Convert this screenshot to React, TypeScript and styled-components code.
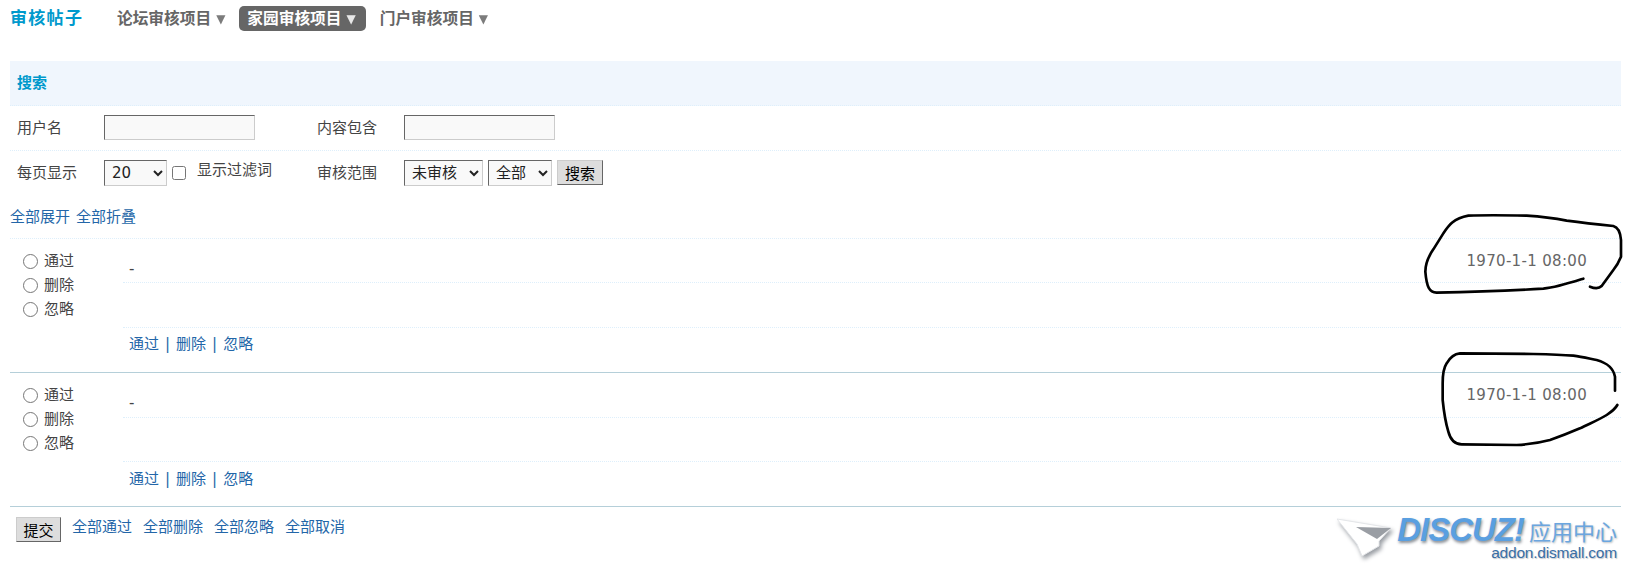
import { FunctionComponent } from "react";
import styled, { createGlobalStyle } from "styled-components";

const GlobalStyle = createGlobalStyle`
  html, body { margin: 0; padding: 0; background: #fff; }
  body {
    font: 15px/20px "DejaVu Sans", "Noto Sans CJK SC", sans-serif;
    color: #444;
  }
  a { color: #2366a8; text-decoration: none; }
`;

const Page = styled.div`
  position: relative;
  width: 1635px;
  height: 578px;
  box-sizing: border-box;
  padding: 0 14px 0 10px;
  overflow: hidden;
`;

/* 상단 메뉴 */
const Header = styled.div`
  display: flex;
  align-items: flex-start;
  height: 61px;
  padding-top: 6px;
  box-sizing: border-box;
`;

const Title = styled.h1`
  margin: 0 27px 0 0;
  width: 72px;
  font-size: 17px;
  line-height: 25px;
  font-weight: bold;
  color: #09c;
  letter-spacing: 1.3px;
  white-space: nowrap;
`;

const Tab = styled.a<{ $active?: boolean }>`
  display: flex;
  align-items: center;
  height: 25px;
  padding: 0 ${(p) => (p.$active ? 10 : 8)}px 0 8px;
  margin-right: 6px;
  border-radius: 5px;
  font-size: 15.7px;
  font-weight: bold;
  white-space: nowrap;
  color: ${(p) => (p.$active ? "#fff" : "#666")};
  background: ${(p) => (p.$active ? "#666" : "transparent")};
`;

const Arrow = styled.span`
  margin-left: 5px;
  font-size: 12px;
  font-family: "DejaVu Sans", sans-serif;
  opacity: 0.85;
`;

/* 검색 영역 */
const SectionHead = styled.div`
  display: flex;
  align-items: center;
  height: 44px;
  padding-left: 7px;
  background: #f0f6fd;
  border-bottom: 1px dotted #deeffb;
  font-size: 15px;
  font-weight: bold;
  color: #09c;
`;

const SearchRow = styled.div<{ $plain?: boolean }>`
  display: grid;
  grid-template-columns: 87px 213px 87px 1fr;
  align-items: center;
  height: 44px;
  padding-left: 7px;
  border-bottom: 1px ${(p) => (p.$plain ? "solid transparent" : "dotted #deeffb")};
`;

const Controls = styled.div`
  display: flex;
  align-items: center;
`;

const TextBox = styled.input`
  width: 151px;
  height: 25px;
  margin-bottom: 2px;
  box-sizing: border-box;
  padding: 0 4px;
  border: 1px solid;
  border-color: #666 #ccc #ccc #666;
  background: #f9f9f9;
`;

const Select = styled.select<{ $w: number }>`
  width: ${(p) => p.$w}px;
  height: 26px;
  margin-right: 5px;
  box-sizing: border-box;
  padding: 0 0 0 3px;
  border: 1px solid;
  border-color: #666 #ccc #ccc #666;
  background: #f9f9f9;
  color: #222;
  font: 15px "DejaVu Sans", "Noto Sans CJK SC", sans-serif;
`;

const Check = styled.input`
  width: 14px;
  height: 14px;
  margin: 0 11px 0 0;
`;

const CheckLabel = styled.span`
  position: relative;
  top: -3px;
`;

const Btn = styled.button`
  width: 46px;
  height: 25px;
  padding: 0;
  box-sizing: border-box;
  border: 1px solid;
  border-color: #ccc #666 #666 #ccc;
  background: #ddd;
  color: #000;
  font: 15px "Noto Sans CJK SC", sans-serif;
`;

const SearchBtn = styled(Btn)`
  margin-bottom: 2px;
`;

const ToggleRow = styled.div`
  display: flex;
  align-items: center;
  gap: 6px;
  height: 44px;
  padding-top: 1px;
  box-sizing: border-box;
  border-bottom: 1px dotted #deeffb;
  margin-top: -1px;
`;

/* 심사 항목 */
const Item = styled.div`
  display: grid;
  grid-template-columns: 113px 1fr;
  border-bottom: 1px solid #b5cfd9;
`;

const Choices = styled.div`
  display: flex;
  flex-direction: column;
  padding: 10px 0 0 13px;
`;

const Choice = styled.label`
  display: flex;
  align-items: center;
  height: 24px;
  gap: 6px;
`;

const Radio = styled.input`
  width: 15px;
  height: 15px;
  margin: 0;
`;

const ItemBody = styled.div`
  display: flex;
  flex-direction: column;
`;

const ItemTop = styled.div<{ $h: number }>`
  display: flex;
  justify-content: space-between;
  align-items: center;
  height: ${(p) => p.$h}px;
  padding: 0 34px 0 6px;
  border-bottom: 1px dotted #deeffb;
`;

const Dash = styled.span`
  padding-top: 16px;
`;

const Time = styled.span`
  font-size: 15px;
  color: #666;
  letter-spacing: 0.32px;
`;

const ItemMiddle = styled.div<{ $h: number }>`
  height: ${(p) => p.$h}px;
  border-bottom: 1px dotted #deeffb;
`;

const ItemLinks = styled.div<{ $pb: number }>`
  display: flex;
  align-items: center;
  gap: 6px;
  height: 44px;
  padding: 0 0 ${(p) => p.$pb}px 6px;
  box-sizing: border-box;
`;

const Pipe = styled.span`
  color: #2366a8;
`;

/* 하단 */
const Footer = styled.div`
  display: flex;
  justify-content: space-between;
  align-items: flex-start;
`;

const FooterActions = styled.div`
  display: flex;
  align-items: flex-start;
  gap: 11px;
  padding: 10px 0 0 6px;
`;

const SubmitBtn = styled(Btn)`
  width: 45px;
`;

const Logo = styled.div`
  display: flex;
  align-items: flex-start;
  padding-top: 8px;
  margin-right: 4px;
`;

const Plane = styled.svg`
  margin-top: 2px;
  filter: drop-shadow(2px 3px 2px #9a9ea4);
`;

const LogoText = styled.div`
  display: flex;
  flex-direction: column;
  align-items: flex-end;
  margin-left: -6px;
`;

const LogoTop = styled.div`
  display: flex;
  align-items: center;
  height: 30px;
`;

const Brand = styled.span`
  display: inline-block;
  font: italic bold 33px/30px "Liberation Sans", sans-serif;
  letter-spacing: -1px;
  color: #5a9fe0;
  text-shadow: 1px 2px 3px #8a8f96;
`;

const BrandCn = styled.span`
  margin-left: 5px;
  font: 22px/30px "Noto Sans CJK SC", sans-serif;
  color: #6ba6df;
  text-shadow: 1px 1px 2px #b8bcc2;
`;

const BrandUrl = styled.span`
  font: 15.5px/16px "Liberation Sans", sans-serif;
  letter-spacing: -0.2px;
  color: #3a6ea5;
  text-shadow: 1px 1px 1px #c4c8cc;
`;

const Scribble = styled.svg`
  position: absolute;
  left: 1400px;
  top: 200px;
  width: 235px;
  height: 260px;
  pointer-events: none;
  fill: none;
  stroke: #000;
  stroke-width: 8;
  stroke-linecap: round;
  stroke-linejoin: round;
`;

const ReviewItem: FunctionComponent<{ name: string; second?: boolean }> = ({ name, second }) => (
  <Item>
    <Choices>
      <Choice><Radio type="radio" name={name} />通过</Choice>
      <Choice><Radio type="radio" name={name} />删除</Choice>
      <Choice><Radio type="radio" name={name} />忽略</Choice>
    </Choices>
    <ItemBody>
      <ItemTop $h={second ? 44 : 43}>
        <Dash>-</Dash>
        <Time>1970-1-1 08:00</Time>
      </ItemTop>
      <ItemMiddle $h={second ? 43 : 44} />
      <ItemLinks $pb={second ? 10 : 12}>
        <a href="#">通过</a>
        <Pipe>|</Pipe>
        <a href="#">删除</a>
        <Pipe>|</Pipe>
        <a href="#">忽略</a>
      </ItemLinks>
    </ItemBody>
  </Item>
);

const App: FunctionComponent = () => {
  return (
    <Page>
      <GlobalStyle />
      <Header>
        <Title>审核帖子</Title>
        <Tab href="#">论坛审核项目<Arrow>▼</Arrow></Tab>
        <Tab href="#" $active>家园审核项目<Arrow>▼</Arrow></Tab>
        <Tab href="#">门户审核项目<Arrow>▼</Arrow></Tab>
      </Header>

      <SectionHead>搜索</SectionHead>
      <SearchRow>
        <span>用户名</span>
        <Controls><TextBox /></Controls>
        <span>内容包含</span>
        <Controls><TextBox /></Controls>
      </SearchRow>
      <SearchRow $plain>
        <span>每页显示</span>
        <Controls>
          <Select $w={63} defaultValue="20"><option>20</option></Select>
          <Check type="checkbox" />
          <CheckLabel>显示过滤词</CheckLabel>
        </Controls>
        <span>审核范围</span>
        <Controls>
          <Select $w={79}><option>未审核</option></Select>
          <Select $w={64}><option>全部</option></Select>
          <SearchBtn type="button">搜索</SearchBtn>
        </Controls>
      </SearchRow>
      <ToggleRow>
        <a href="#">全部展开</a>
        <a href="#">全部折叠</a>
      </ToggleRow>

      <ReviewItem name="m1" />
      <ReviewItem name="m2" second />

      <Footer>
        <FooterActions>
          <SubmitBtn type="submit">提交</SubmitBtn>
          <a href="#">全部通过</a>
          <a href="#">全部删除</a>
          <a href="#">全部忽略</a>
          <a href="#">全部取消</a>
        </FooterActions>
        <Logo>
          <Plane width="66" height="44" viewBox="0 0 66 44">
            <path d="M0 2 L54 11 L42 24 L42 29 L25 39 L20 27 Z" fill="#fff" stroke="#e4e6e9" strokeWidth="1" />
            <path d="M19 10 L54 11 L40 22 Z" fill="#9a9ea4" />
          </Plane>
          <LogoText>
            <LogoTop>
              <Brand>DISCUZ!</Brand>
              <BrandCn>应用中心</BrandCn>
            </LogoTop>
            <BrandUrl>addon.dismall.com</BrandUrl>
          </LogoText>
        </Logo>
      </Footer>

      <Scribble viewBox="0 0 705 780">
        <path d="M550 236 C500 252 470 262 430 266 C330 272 220 276 110 278 C88 276 80 262 76 215 C76 190 85 170 100 148 L130 100 C145 78 160 55 205 47 C260 45 330 46 380 47 C430 50 470 56 500 62 C560 70 600 74 640 78 C655 82 661 95 663 120 L663 170 C655 190 648 200 640 210 L605 258 C598 265 585 266 570 260" />
        <path d="M645 572 L645 530 C640 505 625 490 590 480 C565 475 545 470 520 467 C480 464 440 463 400 462 L180 460 C160 462 150 472 140 490 C130 505 128 520 128 550 L128 600 C132 640 136 665 145 695 C152 722 165 733 185 733 L350 735 C390 733 420 728 450 720 C485 708 510 698 540 685 C570 670 600 658 620 645 C635 635 645 628 652 615" />
      </Scribble>
    </Page>
  );
};

export default App;
